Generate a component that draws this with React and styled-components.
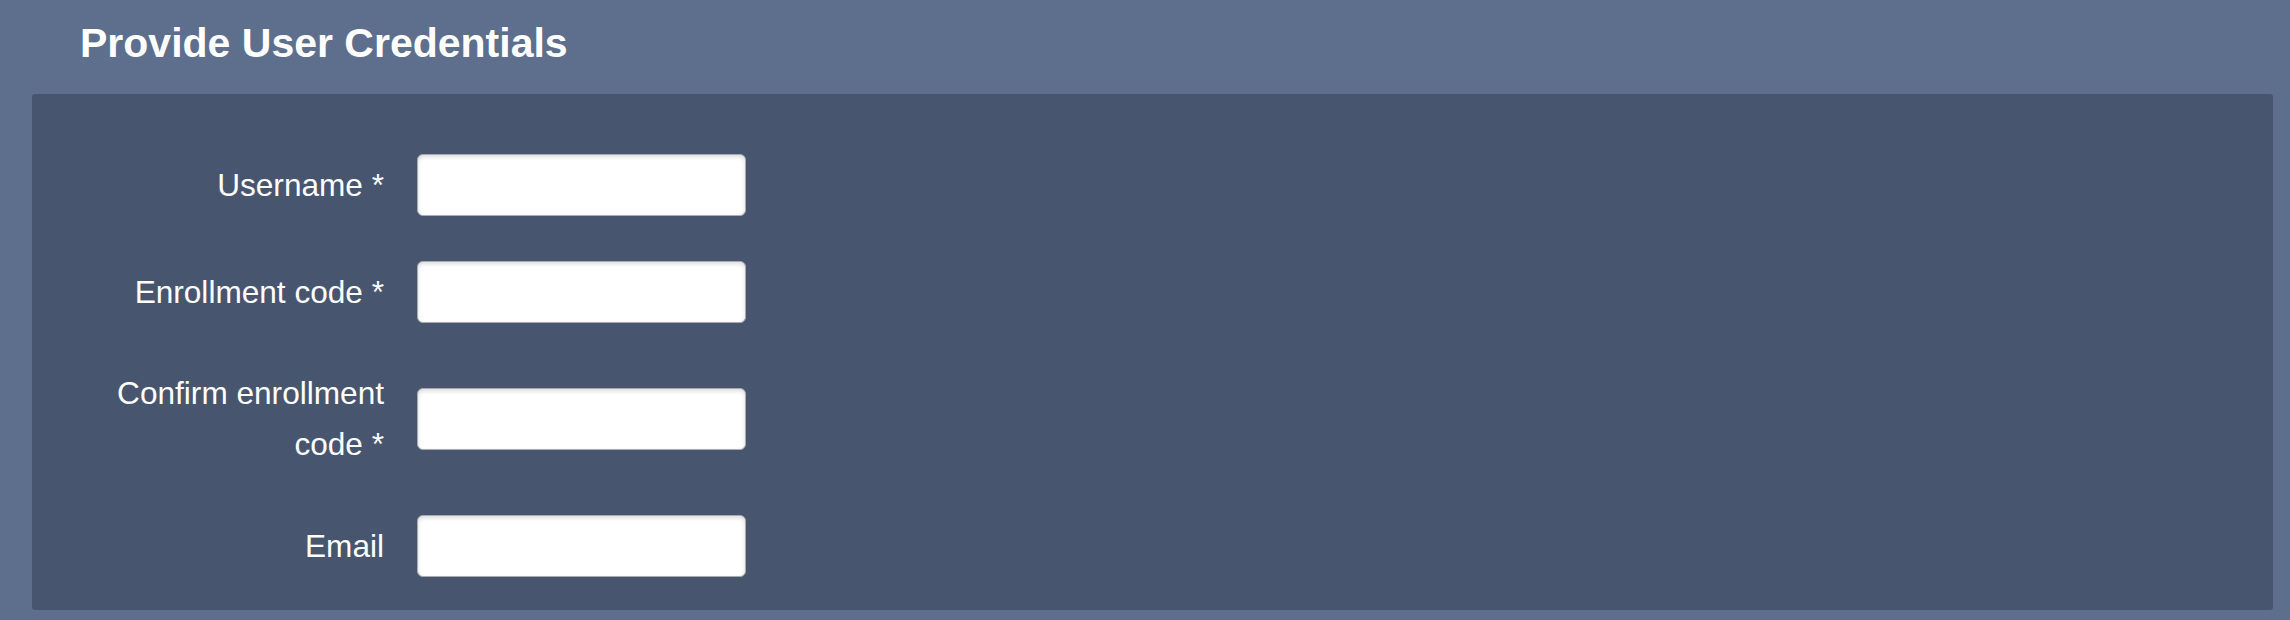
import React from "react";
import styled, { createGlobalStyle } from "styled-components";

const GlobalStyle = createGlobalStyle`
  html, body {
    margin: 0;
    padding: 0;
    background: #5d6f8d;
  }
  body {
    font-family: "Liberation Sans", Arial, Helvetica, sans-serif;
  }
`;

const Page = styled.div`
  min-height: 620px;
  box-sizing: border-box;
  background: #5d6f8d;
  padding: 0 17px 12px 32px;
`;

const Title = styled.h1`
  margin: 0;
  padding: 20px 0 27px 48px;
  font-family: "Liberation Sans", Arial, sans-serif;
  font-weight: 700;
  font-size: 41px;
  line-height: 47px;
  color: #ffffff;
`;

const Panel = styled.div`
  background: #47566e;
  border-radius: 3px;
  padding: 60px 0 33px 60px;
  display: flex;
  flex-direction: column;
  gap: 45px;
`;

const Row = styled.div`
  display: grid;
  grid-template-columns: 292px 329px;
  column-gap: 33px;
  align-items: center;
`;

const Label = styled.label`
  text-align: right;
  color: #ffffff;
  font-family: "Liberation Sans", Arial, sans-serif;
  font-size: 31.6px;
  line-height: 51px;
`;

const Input = styled.input`
  box-sizing: border-box;
  width: 329px;
  height: 62px;
  border: 1px solid #a9abb0;
  border-radius: 6px;
  background: #ffffff;
  box-shadow: inset 0 2px 4px rgba(0, 0, 0, 0.14);
  font-size: 28px;
  padding: 0 12px;
  outline: none;
`;

const fields = [
  { id: "username", label: "Username *", type: "text" },
  { id: "code", label: "Enrollment code *", type: "password" },
  { id: "confirm", label: "Confirm enrollment code *", type: "password" },
  { id: "email", label: "Email", type: "email" },
];

export default function App() {
  return (
    <>
      <GlobalStyle />
      <Page>
        <Title>Provide User Credentials</Title>
        <Panel>
          {fields.map((f) => (
            <Row key={f.id}>
              <Label htmlFor={f.id}>{f.label}</Label>
              <Input id={f.id} type={f.type} />
            </Row>
          ))}
        </Panel>
      </Page>
    </>
  );
}
